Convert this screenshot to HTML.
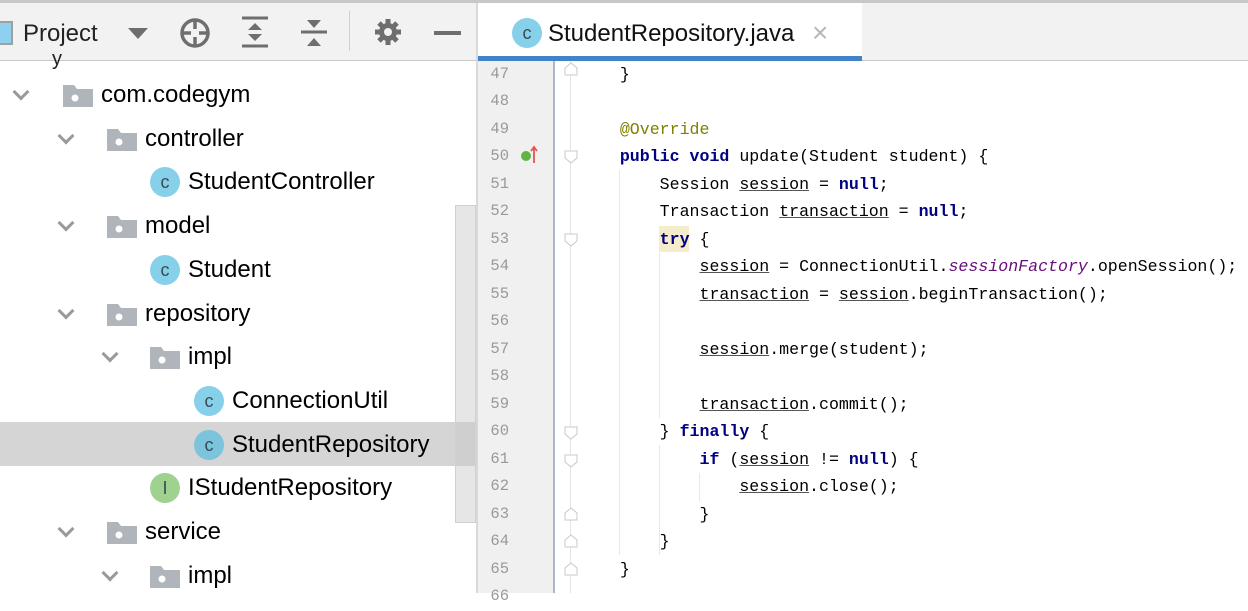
<!DOCTYPE html>
<html><head><meta charset="utf-8"><style>
*{margin:0;padding:0;box-sizing:border-box}
body{width:1248px;height:593px;overflow:hidden;background:#fff;position:relative;font-family:"Liberation Sans",sans-serif}
.abs{position:absolute}
#top{left:0;top:0;width:1248px;height:61px;background:#f2f2f2;border-top:3px solid #c8c8c8;border-bottom:1px solid #c8c8c8}
.tree .row{position:absolute;left:0;width:477px;height:44px;font-size:24px;color:#000;line-height:44px}
.chev{position:absolute;top:13px;width:12px;height:12px;border-right:3px solid #9a9a9a;border-bottom:3px solid #9a9a9a;transform:rotate(45deg)}
.fold{position:absolute;top:12px;width:30px;height:22px}
.ci{position:absolute;top:7px;width:30px;height:30px;border-radius:50%;background:#87d0ea;color:#3a4a55;font-size:18px;line-height:30px;text-align:center}
.code{position:absolute;left:0;top:60.5px;font-family:"Liberation Mono",monospace;font-size:16.6px;line-height:27.5px;white-space:pre;color:#000}
.nums{position:absolute;left:477px;top:60.5px;width:32px;text-align:right;font-family:"Liberation Mono",monospace;font-size:15.5px;line-height:27.5px;color:#999}
.k{color:#000080;font-weight:bold}
.u{text-decoration:underline;text-decoration-color:#555}
.an{color:#808000}
.it{color:#660e7a;font-style:italic}
</style></head><body>
<div id="top" class="abs"></div>
<div class="abs" style="left:0;top:21px;width:13px;height:24px;background:#8fd0ee;border:2px solid #a0a0a0;border-left:none"></div>
<div class="abs" style="left:23px;top:20px;font-size:24px;color:#222">Project</div>
<div class="abs" style="left:128px;top:28px;width:0;height:0;border-left:10px solid transparent;border-right:10px solid transparent;border-top:11px solid #6e6e6e"></div>
<svg class="abs" style="left:178px;top:16px" width="34" height="34" viewBox="0 0 34 34"><circle cx="17" cy="17" r="13" fill="none" stroke="#6e6e6e" stroke-width="3.5"/><path d="M17 4v9M17 21v9M4 17h9M21 17h9" stroke="#6e6e6e" stroke-width="3.5"/></svg>
<svg class="abs" style="left:240px;top:16px" width="30" height="32" viewBox="0 0 30 32"><path d="M2 2h26M2 30h26" stroke="#6e6e6e" stroke-width="3"/><path d="M15 7l7 7H8zM15 25l7-7H8z" fill="#6e6e6e"/></svg>
<svg class="abs" style="left:299px;top:18px" width="30" height="30" viewBox="0 0 30 30"><path d="M2 14h26" stroke="#6e6e6e" stroke-width="3"/><path d="M8 2h14l-7 8zM8 28h14l-7-8z" fill="#6e6e6e"/></svg>
<div class="abs" style="left:349px;top:11px;width:1px;height:40px;background:#d0d0d0"></div>
<svg class="abs" style="left:373px;top:17px" width="30" height="30" viewBox="0 0 30 30"><g fill="#6e6e6e"><circle cx="15" cy="15" r="9"/><g stroke="#6e6e6e" stroke-width="5"><path d="M15 2v26M2 15h26M6 6l18 18M24 6L6 24"/></g></g><circle cx="15" cy="15" r="4" fill="#f2f2f2"/></svg>
<div class="abs" style="left:434px;top:31px;width:27px;height:4px;background:#6e6e6e"></div>
<div class="abs" style="left:478px;top:3px;width:384px;height:58px;background:#fff;border-bottom:5px solid #4083c9"></div>
<div class="abs" style="left:512px;top:18px;width:30px;height:30px;border-radius:50%;background:#87d0ea;color:#3a4a55;font-size:18px;line-height:30px;text-align:center">c</div>
<div class="abs" style="left:548px;top:20px;font-size:24px;color:#111">StudentRepository.java</div>
<div class="abs" style="left:812px;top:18px;font-size:28px;color:#b8b8b8;line-height:30px">×</div>
<div class="abs" style="left:476px;top:3px;width:2px;height:590px;background:#d9d9d9"></div>
<div class="abs" style="left:0;top:422px;width:477px;height:44px;background:#d5d5d5"></div>
<div class="abs" style="left:455px;top:205px;width:21px;height:318px;background:rgba(200,200,200,0.45);border:1px solid #d0d0d0"></div>
<div class="abs" style="left:52px;top:48px;font-size:20px;color:#222">y</div>
<div class="tree">
<div class="row" style="top:73px"><div class="chev" style="left:15px"></div><svg class="fold" style="left:63px" viewBox="0 0 30 22"><path d="M0 0h11l3 4h16v18H0z" fill="#afb5ba"/><circle cx="12" cy="13" r="3.5" fill="#fff"/></svg><span style="position:absolute;left:101px">com.codegym</span></div>
<div class="row" style="top:117px"><div class="chev" style="left:60px"></div><svg class="fold" style="left:107px" viewBox="0 0 30 22"><path d="M0 0h11l3 4h16v18H0z" fill="#afb5ba"/><circle cx="12" cy="13" r="3.5" fill="#fff"/></svg><span style="position:absolute;left:145px">controller</span></div>
<div class="row" style="top:160px"><div class="ci" style="left:150px">c</div><span style="position:absolute;left:188px">StudentController</span></div>
<div class="row" style="top:204px"><div class="chev" style="left:60px"></div><svg class="fold" style="left:107px" viewBox="0 0 30 22"><path d="M0 0h11l3 4h16v18H0z" fill="#afb5ba"/><circle cx="12" cy="13" r="3.5" fill="#fff"/></svg><span style="position:absolute;left:145px">model</span></div>
<div class="row" style="top:248px"><div class="ci" style="left:150px">c</div><span style="position:absolute;left:188px">Student</span></div>
<div class="row" style="top:292px"><div class="chev" style="left:60px"></div><svg class="fold" style="left:107px" viewBox="0 0 30 22"><path d="M0 0h11l3 4h16v18H0z" fill="#afb5ba"/><circle cx="12" cy="13" r="3.5" fill="#fff"/></svg><span style="position:absolute;left:145px">repository</span></div>
<div class="row" style="top:335px"><div class="chev" style="left:104px"></div><svg class="fold" style="left:150px" viewBox="0 0 30 22"><path d="M0 0h11l3 4h16v18H0z" fill="#afb5ba"/><circle cx="12" cy="13" r="3.5" fill="#fff"/></svg><span style="position:absolute;left:188px">impl</span></div>
<div class="row" style="top:379px"><div class="ci" style="left:194px">c</div><span style="position:absolute;left:232px">ConnectionUtil</span></div>
<div class="row" style="top:423px"><div class="ci" style="left:194px;background:#7cc3dc">c</div><span style="position:absolute;left:232px">StudentRepository</span></div>
<div class="row" style="top:466px"><div class="ci" style="left:150px;background:#9fd18f">I</div><span style="position:absolute;left:188px">IStudentRepository</span></div>
<div class="row" style="top:510px"><div class="chev" style="left:60px"></div><svg class="fold" style="left:107px" viewBox="0 0 30 22"><path d="M0 0h11l3 4h16v18H0z" fill="#afb5ba"/><circle cx="12" cy="13" r="3.5" fill="#fff"/></svg><span style="position:absolute;left:145px">service</span></div>
<div class="row" style="top:554px"><div class="chev" style="left:104px"></div><svg class="fold" style="left:150px" viewBox="0 0 30 22"><path d="M0 0h11l3 4h16v18H0z" fill="#afb5ba"/><circle cx="12" cy="13" r="3.5" fill="#fff"/></svg><span style="position:absolute;left:188px">impl</span></div>
</div>
<div class="abs" style="left:478px;top:61px;width:76px;height:532px;background:#f0f0f0"></div>
<div class="abs" style="left:553px;top:61px;width:2px;height:532px;background:#a9b7c6"></div>
<div class="abs" style="left:570px;top:61px;width:1px;height:532px;background:#e4e4e4"></div>
<div class="nums">47
48
49
50
51
52
53
54
55
56
57
58
59
60
61
62
63
64
65
66</div>
<div class="abs" style="left:521px;top:151px;width:10px;height:10px;border-radius:50%;background:#62b543"></div>
<svg class="abs" style="left:529px;top:145px" width="10" height="18"><path d="M5 2v16M2 6l3-4 3 4" stroke="#e05555" stroke-width="1.8" fill="none"/></svg>
<svg class="abs" style="left:563px;top:61px" width="16" height="532"><g fill="#fff" stroke="#c8c8c8">
<path d="M2 14V7l6-5 6 5v7z"/><path d="M2 90v7l6 5 6-5v-7z"/><path d="M2 173v7l6 5 6-5v-7z"/><path d="M2 366v7l6 5 6-5v-7z"/><path d="M2 394v7l6 5 6-5v-7z"/><path d="M2 459v-7l6-5 6 5v7z"/><path d="M2 486v-7l6-5 6 5v7z"/><path d="M2 514v-7l6-5 6 5v7z"/></g></svg>
<div class="abs" style="left:619px;top:170px;width:1px;height:385px;background:#e8e8e8"></div>
<div class="abs" style="left:659px;top:253px;width:1px;height:165px;background:#e8e8e8"></div>
<div class="abs" style="left:659px;top:445px;width:1px;height:110px;background:#e8e8e8"></div>
<div class="abs" style="left:699px;top:473px;width:1px;height:28px;background:#e8e8e8"></div>
<div class="abs" style="left:659px;top:226px;width:30px;height:26px;background:#f5eccb"></div>
<div class="code" style="left:580px">    }

    <span class="an">@Override</span>
    <span class="k">public void</span> update(Student student) {
        Session <span class="u">session</span> = <span class="k">null</span>;
        Transaction <span class="u">transaction</span> = <span class="k">null</span>;
        <span class="k">try</span> {
            <span class="u">session</span> = ConnectionUtil.<span class="it">sessionFactory</span>.openSession();
            <span class="u">transaction</span> = <span class="u">session</span>.beginTransaction();

            <span class="u">session</span>.merge(student);

            <span class="u">transaction</span>.commit();
        } <span class="k">finally</span> {
            <span class="k">if</span> (<span class="u">session</span> != <span class="k">null</span>) {
                <span class="u">session</span>.close();
            }
        }
    }
</div>
</body></html>
